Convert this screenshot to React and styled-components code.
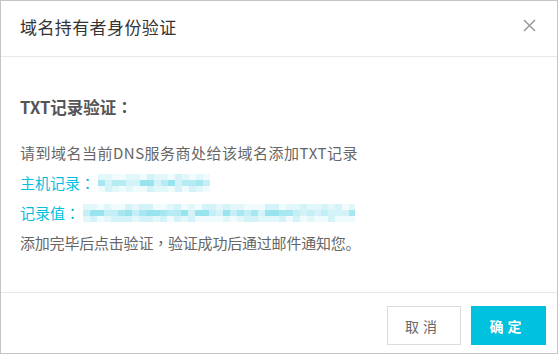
import React from 'react';
import styled, { createGlobalStyle } from 'styled-components';

const GlobalStyle = createGlobalStyle`
  html, body {
    margin: 0;
    padding: 0;
    background: #fff;
  }
  body {
    font-family: "Noto Sans CJK SC", "Noto Sans", sans-serif;
  }
`;

const Dialog = styled.div`
  box-sizing: border-box;
  width: 558px;
  height: 354px;
  border: 1px solid #c4c4c4;
  background: #fff;
  display: flex;
  flex-direction: column;
`;

const Header = styled.div`
  height: 55px;
  border-bottom: 1px solid #e6e9ed;
  display: flex;
  align-items: center;
  justify-content: space-between;
  padding: 0 20px 0 19px;
  flex-shrink: 0;
`;

const Title = styled.div`
  font-size: 17px;
  color: #333;
  letter-spacing: 0.4px;
  margin-top: -5px;
`;

const CloseButton = styled.button`
  border: none;
  background: none;
  padding: 0;
  width: 16px;
  height: 16px;
  display: flex;
  align-items: center;
  justify-content: center;
  cursor: pointer;
  margin-top: -6px;
`;

const Body = styled.div`
  flex: 1;
  padding: 38px 19px 0;
`;

const Heading = styled.div`
  font-size: 16.5px;
  font-weight: 700;
  color: #555;
  margin-bottom: 19px;
`;

// centred full-width punctuation, as in the reference font
const Punct = styled.span`
  font-family: "Noto Sans CJK TC", sans-serif;
`;

const Line = styled.div`
  font-size: 15px;
  letter-spacing: ${props => props.$spacing || 0}px;
  color: ${props => (props.$accent ? '#00c1de' : '#666')};
  height: 30px;
  line-height: 30px;
  display: flex;
  align-items: center;
  white-space: nowrap;
`;

const Footer = styled.div`
  height: 61px;
  border-top: 1px solid #e6e9ed;
  display: flex;
  justify-content: flex-end;
  align-items: flex-start;
  gap: 10px;
  padding: 13px 11px 0 0;
  box-sizing: border-box;
  flex-shrink: 0;
`;

const Button = styled.button`
  box-sizing: border-box;
  width: ${props => (props.$primary ? 75 : 74)}px;
  height: 39px;
  font-family: inherit;
  font-size: 14px;
  letter-spacing: 4px;
  padding-left: 4px;
  border: 1px solid ${props => (props.$primary ? '#00c1de' : '#dcdcdc')};
  background: ${props => (props.$primary ? '#00c1de' : '#fff')};
  color: ${props => (props.$primary ? '#fff' : '#666')};
  font-weight: ${props => (props.$primary ? 700 : 400)};
  cursor: pointer;
`;

const MaskWrap = styled.span`
  display: block;
  margin-left: 3px;
`;

// pixel-mosaic placeholder for masked values
const shades = ['#f0fbfd', '#e2f7fa', '#d3f3f8', '#c4eff6', '#b5ebf3', '#a6e7f1', '#97e3ee'];

const Mosaic = ({ width, seed }) => {
  const cols = Math.ceil(width / 7);
  const rects = [];
  let s = seed;
  const rand = () => {
    s = (s * 9301 + 49297) % 233280;
    return s / 233280;
  };
  for (let r = 0; r < 3; r++) {
    for (let c = 0; c < cols; c++) {
      const base = r === 1 ? 2 : 0;
      const idx = Math.min(shades.length - 1, base + Math.floor(rand() * (r === 1 ? 5 : 3)));
      rects.push(
        <rect key={`${r}-${c}`} x={c * 7} y={r * 6} width={7} height={6} fill={shades[idx]} />
      );
    }
  }
  return (
    <MaskWrap>
      <svg width={width} height={18} style={{ display: 'block' }}>
        {rects}
      </svg>
    </MaskWrap>
  );
};

const App = () => (
  <>
    <GlobalStyle />
    <Dialog>
      <Header>
        <Title>域名持有者身份验证</Title>
        <CloseButton aria-label="close">
          <svg width="13" height="13" viewBox="0 0 13 13">
            <path d="M1 1L12 12M12 1L1 12" stroke="#999" strokeWidth="1.5" />
          </svg>
        </CloseButton>
      </Header>
      <Body>
        <Heading>TXT记录验证<Punct>：</Punct></Heading>
        <Line $spacing={0.5}>请到域名当前DNS服务商处给该域名添加TXT记录</Line>
        <Line $accent>
          主机记录<Punct>：</Punct><Mosaic width={112} seed={7} />
        </Line>
        <Line $accent>
          记录值<Punct>：</Punct><Mosaic width={272} seed={31} />
        </Line>
        <Line $spacing={-0.2}>添加完毕后点击验证<Punct>，</Punct>验证成功后通过邮件通知您。</Line>
      </Body>
      <Footer>
        <Button>取消</Button>
        <Button $primary>确定</Button>
      </Footer>
    </Dialog>
  </>
);

export default App;
